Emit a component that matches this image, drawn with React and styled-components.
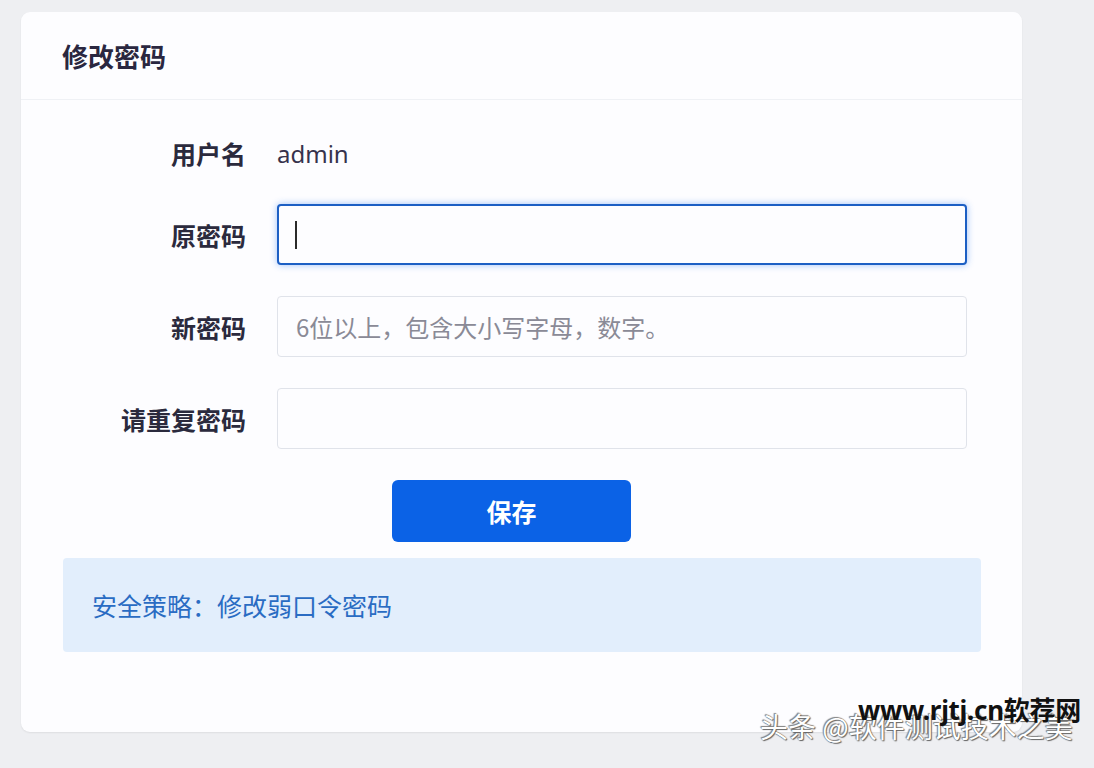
import React from 'react'
import styled, { createGlobalStyle } from 'styled-components'

const GlobalStyle = createGlobalStyle`
  html, body {
    margin: 0;
    padding: 0;
    background: #eeeff2;
    font-family: "Noto Sans", "Noto Sans CJK SC", sans-serif;
  }
`

const Page = styled.div`
  position: relative;
  width: 1094px;
  height: 768px;
  box-sizing: border-box;
  padding: 12px 72px 36px 21px;
  overflow: hidden;
`

const Card = styled.section`
  width: 1001px;
  height: 720px;
  background: #fdfdff;
  border-radius: 9px;
  box-shadow: 0 1px 2px rgba(0, 0, 0, 0.07);
  display: flex;
  flex-direction: column;
`

const Header = styled.header`
  height: 88px;
  box-sizing: border-box;
  padding-left: 41px;
  display: flex;
  align-items: center;
  border-bottom: 1px solid #eff1f5;
`

const Title = styled.h2`
  margin: 0;
  font-size: 26px;
  font-weight: 600;
  color: #2a2740;
  font-family: "Noto Sans CJK SC", sans-serif;
`

const Form = styled.form`
  display: grid;
  grid-template-columns: 225px 690px;
  column-gap: 31px;
  row-gap: 31px;
  padding-top: 33px;
`

const Label = styled.label`
  height: ${(p) => (p.short ? '40px' : '61px')};
  display: flex;
  align-items: center;
  justify-content: flex-end;
  font-size: 25px;
  font-weight: 700;
  color: #2b2a3d;
  font-family: "Noto Sans CJK SC", sans-serif;
`

const Value = styled.div`
  height: 40px;
  display: flex;
  align-items: center;
  font-size: 24px;
  color: #36324c;
`

const Field = styled.div`
  position: relative;
  height: 61px;
`

const Input = styled.input`
  width: 100%;
  height: 100%;
  box-sizing: border-box;
  padding: 0 18px;
  font-size: 24px;
  font-family: "Noto Sans CJK SC", sans-serif;
  color: #333;
  background: #fdfdff;
  border-radius: 4px;
  outline: none;
  border: ${(p) => (p.focused ? '2px solid #1c5fc4' : '1px solid #e0e3ea')};
  box-shadow: ${(p) => (p.focused ? '0 0 7px rgba(40, 120, 240, 0.45)' : 'none')};

  &::placeholder {
    color: #8a8a96;
  }
`

const Caret = styled.span`
  position: absolute;
  left: 18px;
  top: 17px;
  width: 2px;
  height: 28px;
  background: #2a2a2a;
`

const Actions = styled.div`
  grid-column: 2;
  padding-left: 115px;
`

const SaveButton = styled.button`
  width: 239px;
  height: 62px;
  border: none;
  border-radius: 6px;
  background: #0b62e6;
  color: #fff;
  font-size: 25px;
  font-weight: 700;
  font-family: "Noto Sans CJK SC", sans-serif;
  cursor: pointer;
`

const Notice = styled.div`
  margin: 16px 41px 0 42px;
  height: 94px;
  box-sizing: border-box;
  padding: 0 29px;
  display: flex;
  align-items: center;
  background: #e2eefc;
  border-radius: 4px;
  color: #2a6cc3;
  font-size: 25px;
  font-family: "Noto Sans CJK SC", sans-serif;
`

const Watermark = styled.div`
  position: absolute;
  right: 0;
  bottom: 0;
  width: 340px;
  height: 70px;
  pointer-events: none;
`

const Source = styled.span`
  position: absolute;
  left: 6px;
  top: 8px;
  font-size: 28px;
  color: #fff;
  font-family: "Noto Sans CJK SC", sans-serif;
  white-space: nowrap;
  text-shadow: 0 0 1px #555, 1px 1px 1px #666, -1px -1px 1px #888;
`

const Site = styled.span`
  position: absolute;
  left: 104px;
  top: -8px;
  font-size: 26px;
  font-weight: 700;
  letter-spacing: -0.3px;
  color: #111;
  font-family: "Noto Sans", "Noto Sans CJK SC", sans-serif;
  white-space: nowrap;
`

export default function App() {
  return (
    <>
      <GlobalStyle />
      <Page>
        <Card>
          <Header>
            <Title>修改密码</Title>
          </Header>
          <Form onSubmit={(e) => e.preventDefault()}>
            <Label short>用户名</Label>
            <Value>admin</Value>

            <Label>原密码</Label>
            <Field>
              <Input type="password" focused />
              <Caret />
            </Field>

            <Label>新密码</Label>
            <Field>
              <Input type="password" placeholder="6位以上，包含大小写字母，数字。" />
            </Field>

            <Label>请重复密码</Label>
            <Field>
              <Input type="password" />
            </Field>

            <Actions>
              <SaveButton type="submit">保存</SaveButton>
            </Actions>
          </Form>
          <Notice>安全策略：修改弱口令密码</Notice>
        </Card>
        <Watermark>
          <Source>头条 @软件测试技术之美</Source>
          <Site>www.rjtj.cn软荐网</Site>
        </Watermark>
      </Page>
    </>
  )
}
